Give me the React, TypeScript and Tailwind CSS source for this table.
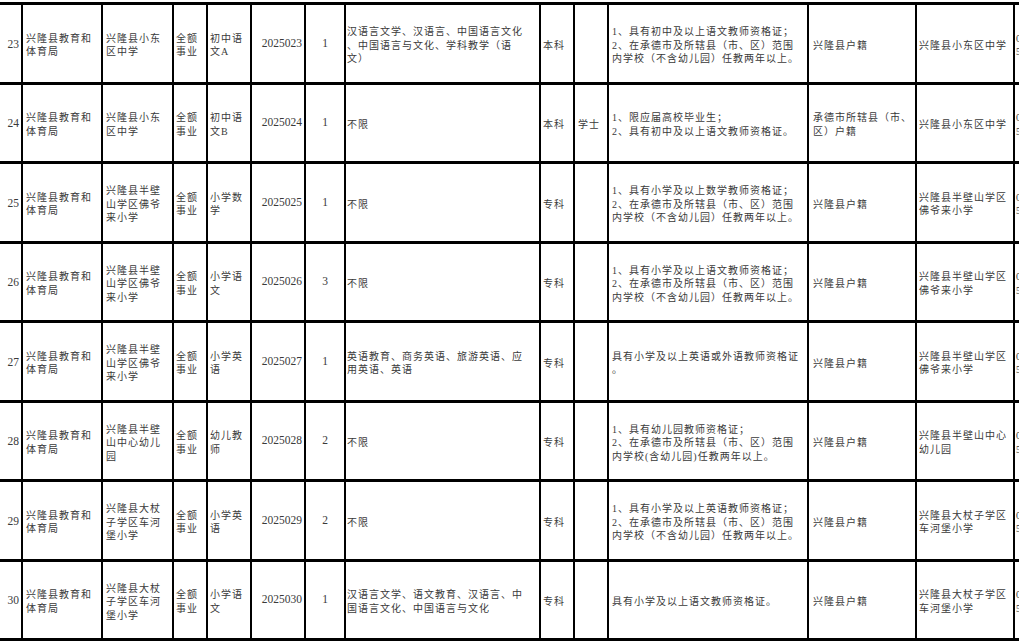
import React from "react";

type Row = {
  no: string;
  dept: string[];
  unit: string[];
  kind: string[];
  post: string[];
  code: string;
  count: string;
  major: string[];
  edu: string;
  degree: string;
  req: string[];
  hukou: string[];
  place: string[];
};

const DEPT = ["兴隆县教育和", "体育局"];
const KIND = ["全额", "事业"];
const REQ_TAIL = ["2、在承德市及所辖县（市、区）范围", "内学校（不含幼儿园）任教两年以上。"];

const ROWS: Row[] = [
  {
    no: "23",
    dept: DEPT,
    unit: ["兴隆县小东", "区中学"],
    kind: KIND,
    post: ["初中语", "文A"],
    code: "2025023",
    count: "1",
    major: ["汉语言文学、汉语言、中国语言文化", "、中国语言与文化、学科教学（语", "文）"],
    edu: "本科",
    degree: "",
    req: ["1、具有初中及以上语文教师资格证；", ...REQ_TAIL],
    hukou: ["兴隆县户籍"],
    place: ["兴隆县小东区中学"],
  },
  {
    no: "24",
    dept: DEPT,
    unit: ["兴隆县小东", "区中学"],
    kind: KIND,
    post: ["初中语", "文B"],
    code: "2025024",
    count: "1",
    major: ["不限"],
    edu: "本科",
    degree: "学士",
    req: ["1、限应届高校毕业生；", "2、具有初中及以上语文教师资格证。"],
    hukou: ["承德市所辖县（市、", "区）户籍"],
    place: ["兴隆县小东区中学"],
  },
  {
    no: "25",
    dept: DEPT,
    unit: ["兴隆县半壁", "山学区佛爷", "来小学"],
    kind: KIND,
    post: ["小学数", "学"],
    code: "2025025",
    count: "1",
    major: ["不限"],
    edu: "专科",
    degree: "",
    req: ["1、具有小学及以上数学教师资格证；", ...REQ_TAIL],
    hukou: ["兴隆县户籍"],
    place: ["兴隆县半壁山学区", "佛爷来小学"],
  },
  {
    no: "26",
    dept: DEPT,
    unit: ["兴隆县半壁", "山学区佛爷", "来小学"],
    kind: KIND,
    post: ["小学语", "文"],
    code: "2025026",
    count: "3",
    major: ["不限"],
    edu: "专科",
    degree: "",
    req: ["1、具有小学及以上语文教师资格证；", ...REQ_TAIL],
    hukou: ["兴隆县户籍"],
    place: ["兴隆县半壁山学区", "佛爷来小学"],
  },
  {
    no: "27",
    dept: DEPT,
    unit: ["兴隆县半壁", "山学区佛爷", "来小学"],
    kind: KIND,
    post: ["小学英", "语"],
    code: "2025027",
    count: "1",
    major: ["英语教育、商务英语、旅游英语、应", "用英语、英语"],
    edu: "专科",
    degree: "",
    req: ["具有小学及以上英语或外语教师资格证", "。"],
    hukou: ["兴隆县户籍"],
    place: ["兴隆县半壁山学区", "佛爷来小学"],
  },
  {
    no: "28",
    dept: DEPT,
    unit: ["兴隆县半壁", "山中心幼儿", "园"],
    kind: KIND,
    post: ["幼儿教", "师"],
    code: "2025028",
    count: "2",
    major: ["不限"],
    edu: "专科",
    degree: "",
    req: ["1、具有幼儿园教师资格证；", "2、在承德市及所辖县（市、区）范围", "内学校(含幼儿园)任教两年以上。"],
    hukou: ["兴隆县户籍"],
    place: ["兴隆县半壁山中心", "幼儿园"],
  },
  {
    no: "29",
    dept: DEPT,
    unit: ["兴隆县大杖", "子学区车河", "堡小学"],
    kind: KIND,
    post: ["小学英", "语"],
    code: "2025029",
    count: "2",
    major: ["不限"],
    edu: "专科",
    degree: "",
    req: ["1、具有小学及以上英语教师资格证；", ...REQ_TAIL],
    hukou: ["兴隆县户籍"],
    place: ["兴隆县大杖子学区", "车河堡小学"],
  },
  {
    no: "30",
    dept: DEPT,
    unit: ["兴隆县大杖", "子学区车河", "堡小学"],
    kind: KIND,
    post: ["小学语", "文"],
    code: "2025030",
    count: "1",
    major: ["汉语言文学、语文教育、汉语言、中", "国语言文化、中国语言与文化"],
    edu: "专科",
    degree: "",
    req: ["具有小学及以上语文教师资格证。"],
    hukou: ["兴隆县户籍"],
    place: ["兴隆县大杖子学区", "车河堡小学"],
  },
];

// text cell: left aligned chinese lines, nudged a bit lower like the scan
function Text({ lines, pad }: { lines: string[]; pad: string }) {
  return (
    <div className={"flex items-center bg-white pt-[4px] text-[10px] leading-[13.5px] tracking-[1px] " + pad}>
      <div>
        {lines.map((l, i) => (
          <div key={i} className="whitespace-nowrap">
            {l}
          </div>
        ))}
      </div>
    </div>
  );
}

function Num({ value, align }: { value: string; align: string }) {
  return (
    <div className={"flex items-center bg-white text-[11.5px] " + align}>
      <span>{value}</span>
    </div>
  );
}

export default function App() {
  return (
    <div className="h-[643px] w-[1019px] overflow-hidden bg-white pt-[2px]">
      <div className="grid w-[1100px] grid-cols-[21px_78px_69px_32px_42px_52px_38px_193px_32px_32px_198px_106px_96px_60px] grid-rows-[repeat(8,76.5px)] gap-x-[2px] gap-y-[3px] bg-black py-[3px] font-['Liberation_Serif','Noto_Sans_CJK_SC',serif] text-[#3a3a3a]">
        {ROWS.map((r) => (
          <React.Fragment key={r.no}>
            <Num value={r.no} align="justify-end pr-[2px] pt-[2px]" />
            <Text lines={r.dept} pad="pl-[3px]" />
            <Text lines={r.unit} pad="pl-[3px]" />
            <Text lines={r.kind} pad="pl-[2px]" />
            <Text lines={r.post} pad="pl-[2px]" />
            <Num value={r.code} align="justify-end pr-[2px]" />
            <Num value={r.count} align="justify-center" />
            <Text lines={r.major} pad="pl-[1px]" />
            <Text lines={[r.edu]} pad="pl-[2px]" />
            <Text lines={r.degree ? [r.degree] : []} pad="pl-[3px]" />
            <Text lines={r.req} pad="pl-[3px]" />
            <Text lines={r.hukou} pad="pl-[4px]" />
            <Text lines={r.place} pad="pl-[2px]" />
            <Text lines={["0314-", "5051"]} pad="pl-[1px]" />
          </React.Fragment>
        ))}
      </div>
    </div>
  );
}
